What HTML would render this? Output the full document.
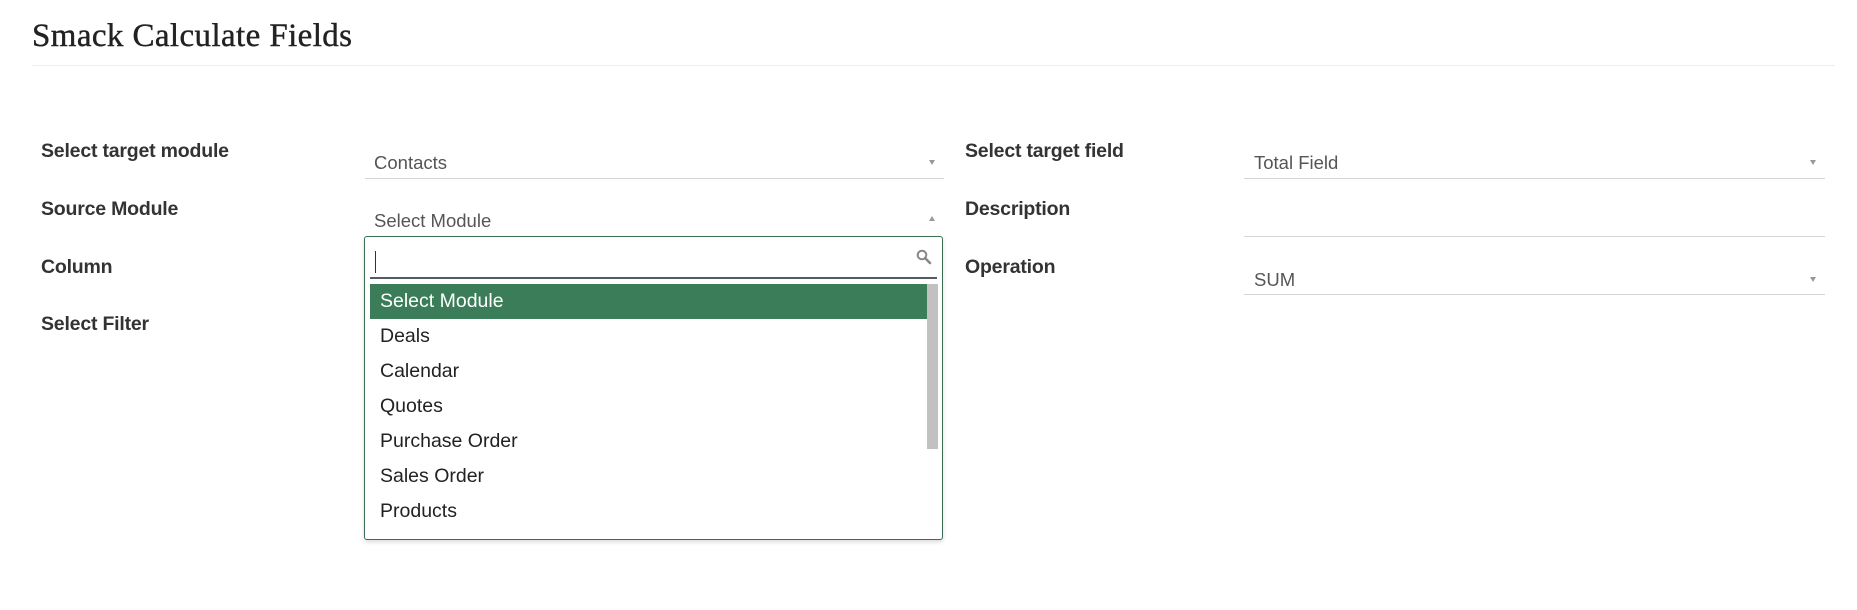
<!DOCTYPE html>
<html><head><meta charset="utf-8"><style>
body{margin:0;background:#fff;width:1857px;height:610px;position:relative;overflow:hidden;font-family:"Liberation Sans",sans-serif}
.a{position:absolute}
h1{position:absolute;left:32px;top:18px;margin:0;font:400 33px "Liberation Serif",serif;color:#222;letter-spacing:0.4px;-webkit-text-stroke:0.4px #222}
.hr{position:absolute;left:32px;top:65px;width:1803px;height:1px;background:#eee}
.lbl{position:absolute;font:bold 19.5px "Liberation Sans",sans-serif;color:#333;letter-spacing:-0.2px}
.fld{position:absolute;height:1px;background:#d6d6d6}
.val{position:absolute;font-size:18.5px;color:#555}
.arr{position:absolute;width:0;height:0;border-left:3px solid transparent;border-right:3px solid transparent}
.dn{border-top:5px solid #999}
.up{border-bottom:5px solid #999}
.dd{position:absolute;left:364px;top:236px;width:579px;height:304px;border:1px solid #3a6e55;border-radius:3px;box-sizing:border-box;box-shadow:0 2px 4px rgba(0,0,0,.15);background:#fff}
.it{position:absolute;left:15px;font-size:19.5px;color:#222}
</style></head><body>
<h1>Smack Calculate Fields</h1>
<div class="hr"></div>

<div class="lbl" style="left:41px;top:140px">Select target module</div>
<div class="lbl" style="left:41px;top:198px">Source Module</div>
<div class="lbl" style="left:41px;top:256px">Column</div>
<div class="lbl" style="left:41px;top:313px">Select Filter</div>

<div class="val" style="left:374px;top:152px">Contacts</div>
<div class="arr dn" style="left:929px;top:160px"></div>
<div class="fld" style="left:365px;top:178px;width:579px"></div>
<div class="val" style="left:374px;top:210px">Select Module</div>
<div class="arr up" style="left:929px;top:216px"></div>

<div class="dd">
 <div class="a" style="left:10px;top:14px;width:1px;height:22px;background:#333"></div>
 <svg class="a" style="left:551px;top:12px" width="16" height="16" viewBox="0 0 16 16"><circle cx="6" cy="6" r="4.3" fill="none" stroke="#888" stroke-width="2"/><path d="M9 9l5 5" stroke="#888" stroke-width="2.6" stroke-linecap="round"/></svg>
 <div class="a" style="left:5px;top:40px;width:567px;height:2px;background:#555a6a"></div>
 <div class="a" style="left:5px;top:47px;width:557px;height:35px;background:#3a7d58"></div>
 <div class="it" style="top:53px;color:#fff">Select Module</div>
 <div class="a" style="left:562px;top:47px;width:11px;height:165px;background:#c1c1c1"></div>
 <div class="it" style="top:88px">Deals</div>
 <div class="it" style="top:123px">Calendar</div>
 <div class="it" style="top:158px">Quotes</div>
 <div class="it" style="top:193px">Purchase Order</div>
 <div class="it" style="top:228px">Sales Order</div>
 <div class="it" style="top:263px">Products</div>
</div>

<div class="lbl" style="left:965px;top:140px">Select target field</div>
<div class="lbl" style="left:965px;top:198px">Description</div>
<div class="lbl" style="left:965px;top:256px">Operation</div>

<div class="val" style="left:1254px;top:152px">Total Field</div>
<div class="arr dn" style="left:1810px;top:160px"></div>
<div class="fld" style="left:1244px;top:178px;width:581px"></div>
<div class="fld" style="left:1244px;top:236px;width:581px"></div>
<div class="val" style="left:1254px;top:269px">SUM</div>
<div class="arr dn" style="left:1810px;top:277px"></div>
<div class="fld" style="left:1244px;top:294px;width:581px"></div>
</body></html>
